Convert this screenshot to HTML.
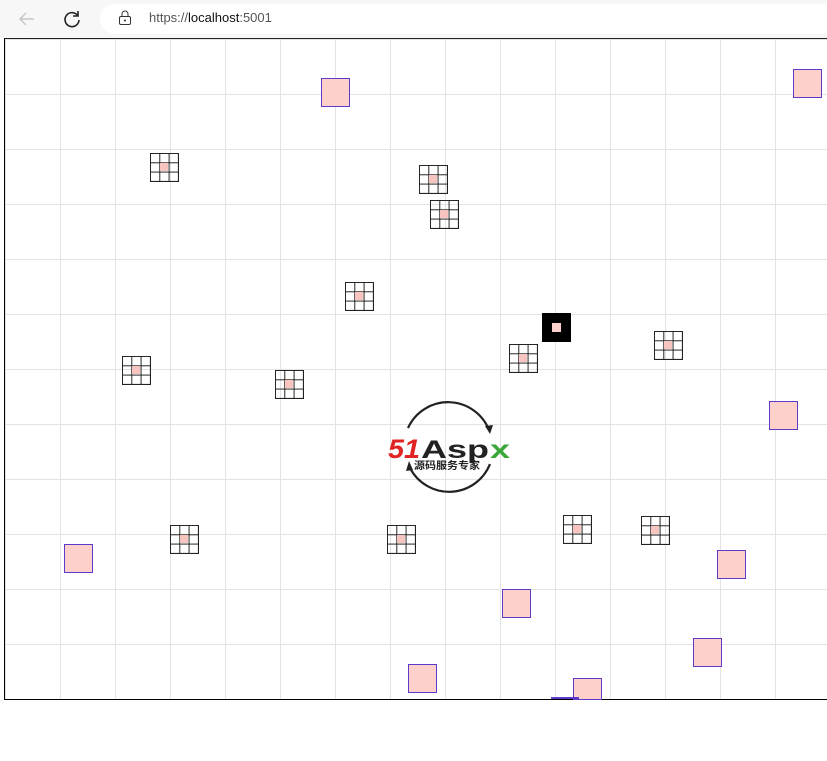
<!DOCTYPE html>
<html><head><meta charset="utf-8"><style>
html,body{margin:0;padding:0;width:827px;height:761px;overflow:hidden;background:#fff;font-family:"Liberation Sans","Noto Sans CJK SC",sans-serif;}
.bar{position:absolute;left:0;top:0;width:827px;height:38px;background:#f7f7f7;}
.addr{position:absolute;left:100px;top:4px;width:760px;height:30px;background:#fff;border-radius:15px;}
.url{position:absolute;left:149px;top:10px;font-size:13px;color:#555;}
.url b{font-weight:normal;color:#111}
.canvas{position:absolute;left:4px;top:38px;width:830px;height:660px;border-left:1.5px solid #000;border-bottom:1.5px solid #000;border-top:1px solid #222;
background-image:linear-gradient(to right,#e3e3e3 1px,transparent 1px),linear-gradient(to bottom,#e3e3e3 1px,transparent 1px);
background-size:55px 55px;background-position:55px 55px;}
.p{position:absolute;width:27px;height:27px;background:#fdd0cc;border:1px solid #5b3bc8;}
.g{position:absolute;width:28px;height:28px;
background-image:linear-gradient(to right,#222 1px,transparent 1px),linear-gradient(to bottom,#222 1px,transparent 1px);
background-size:9.3px 9.3px;border-right:1px solid #222;border-bottom:1px solid #222;}
.g::after{content:"";position:absolute;left:10px;top:10px;width:8px;height:8px;background:#f7c4c0;}
.k{position:absolute;left:542px;top:313px;width:29px;height:29px;background:#000;}
.k::after{content:"";position:absolute;left:10px;top:10px;width:9px;height:9px;background:#fcd0cc;}
</style></head><body>
<div class="bar"></div>
<svg style="position:absolute;left:16px;top:8px" width="22" height="22" viewBox="0 0 22 22"><path d="M18 11H4M10 5l-6 6 6 6" stroke="#c8c8c8" stroke-width="1.5" fill="none"/></svg>
<svg style="position:absolute;left:61px;top:8px" width="22" height="22" viewBox="0 0 22 22"><path d="M17 8A7 7 0 1 0 18 12" stroke="#222" stroke-width="1.6" fill="none"/><path d="M17 3v5h-5" stroke="#222" stroke-width="1.6" fill="none"/></svg>
<div class="addr"></div>
<svg style="position:absolute;left:118px;top:10px" width="14" height="16" viewBox="0 0 14 16"><rect x="1.5" y="6.5" width="11" height="8" rx="1.5" stroke="#333" fill="none"/><path d="M4 6.5V4a3 3 0 0 1 6 0v2.5" stroke="#333" fill="none"/><circle cx="7" cy="10.5" r="1" fill="#333"/></svg>
<div class="url">https://<b>localhost</b>:5001</div>
<div class="canvas"></div>
<div class="p" style="left:321px;top:78px"></div>
<div class="p" style="left:793px;top:69px"></div>
<div class="p" style="left:769px;top:401px"></div>
<div class="p" style="left:64px;top:544px"></div>
<div class="p" style="left:717px;top:550px"></div>
<div class="p" style="left:502px;top:589px"></div>
<div class="p" style="left:693px;top:638px"></div>
<div class="p" style="left:408px;top:664px"></div>
<div class="p" style="left:573px;top:678px;height:20px"></div>
<div style="position:absolute;left:551px;top:697px;width:28px;height:2px;background:#5b3bc8"></div>
<div class="g" style="left:150px;top:153px"></div>
<div class="g" style="left:419px;top:165px"></div>
<div class="g" style="left:430px;top:200px"></div>
<div class="g" style="left:345px;top:282px"></div>
<div class="g" style="left:509px;top:344px"></div>
<div class="g" style="left:654px;top:331px"></div>
<div class="g" style="left:122px;top:356px"></div>
<div class="g" style="left:275px;top:370px"></div>
<div class="g" style="left:170px;top:525px"></div>
<div class="g" style="left:387px;top:525px"></div>
<div class="g" style="left:563px;top:515px"></div>
<div class="g" style="left:641px;top:516px"></div>
<div class="k"></div>
<svg style="position:absolute;left:386px;top:400px" width="130" height="96" viewBox="0 0 130 96">
<path d="M22 28A44 44 0 0 1 103 30" stroke="#222" stroke-width="2.2" fill="none"/>
<path d="M104 64A44 44 0 0 1 24 68" stroke="#222" stroke-width="2.2" fill="none"/>
<path d="M99 26l5 8 3-9z" fill="#222"/><path d="M20 71l3-10 4 9z" fill="#222"/>
<text x="2" y="58" font-family="Liberation Sans" font-weight="bold" font-style="italic" font-size="27" fill="#e02424" textLength="32" lengthAdjust="spacingAndGlyphs">51</text>
<text x="35" y="58" font-family="Liberation Sans" font-weight="bold" font-size="25" fill="#222" textLength="68" lengthAdjust="spacingAndGlyphs">Asp</text>
<text x="104" y="58" font-family="Liberation Sans" font-weight="bold" font-size="25" fill="#3aa83a" textLength="20" lengthAdjust="spacingAndGlyphs">x</text>
<text x="28" y="69" font-family="Noto Sans CJK SC" font-weight="bold" font-size="10" fill="#222" textLength="66" lengthAdjust="spacingAndGlyphs">源码服务专家</text>
</svg>
</body></html>
